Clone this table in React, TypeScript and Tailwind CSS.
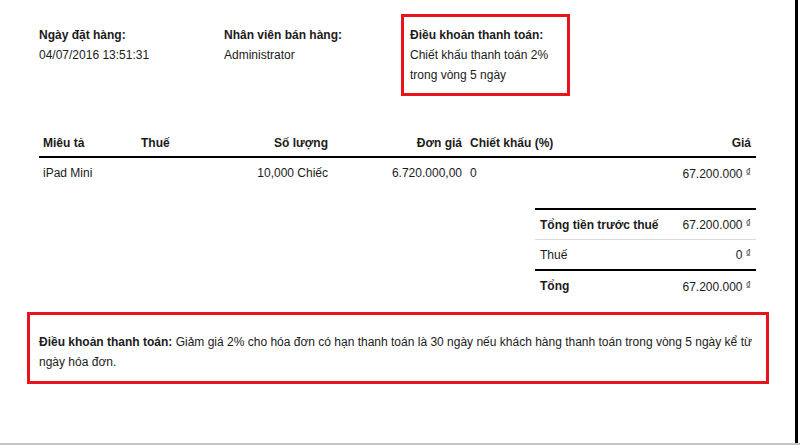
/**
 * Hóa đơn — phần thông tin đơn hàng, bảng sản phẩm và điều khoản thanh toán.
 */

const lines = [
  {
    desc: "iPad Mini",
    tax: "",
    qty: "10,000 Chiếc",
    unit: "6.720.000,00",
    discount: "0",
    price: "67.200.000",
  },
];

const totals = [
  { label: "Tổng tiền trước thuế", value: "67.200.000", bold: true, row: "h-[30px] border-b border-[#dcdcdc]" },
  { label: "Thuế", value: "0", bold: false, row: "h-[31px] border-b-2 border-black" },
  { label: "Tổng", value: "67.200.000", bold: true, row: "h-[30px]" },
];

function Money({ value }: { value: string }) {
  return (
    <span>
      {value} <span className="text-[10px] align-[2px]">₫</span>
    </span>
  );
}

const cols = "grid grid-cols-[98px_100px_95px_134px_140px_150px]";

export default function App() {
  return (
    <div
      className="h-[445px] w-[800px] overflow-hidden border-b-2 border-[#c4c4c4] bg-white text-[12px] leading-[20px] text-[#1b1b1b]"
      style={{ fontFamily: '"Liberation Sans", Arial, sans-serif' }}
    >
      <div className="h-full w-[798px] border-r-[3px] border-black">
        {/* Thông tin đơn hàng */}
        <div className="flex items-start pl-[39px] pt-[14px]">
          <div className="w-[185px] pt-[11px]">
            <p className="font-bold">Ngày đặt hàng:</p>
            <p>04/07/2016 13:51:31</p>
          </div>
          <div className="w-[177px] pt-[11px]">
            <p className="font-bold">Nhân viên bán hàng:</p>
            <p>Administrator</p>
          </div>
          <div className="w-[169px] border-[3px] border-[#e8141c] pb-[8px] pl-[6px] pt-[8px]">
            <p className="font-bold">Điều khoản thanh toán:</p>
            <p>Chiết khấu thanh toán 2%</p>
            <p>trong vòng 5 ngày</p>
          </div>
        </div>

        {/* Bảng sản phẩm */}
        <div className="ml-[39px] mt-[37px] w-[717px]">
          <div className={`${cols} border-b-2 border-black pb-[3px] font-bold`}>
            <div className="pl-[4px]">Miêu tả</div>
            <div className="pl-[4px]">Thuế</div>
            <div className="pr-[4px] text-right">Số lượng</div>
            <div className="pr-[4px] text-right">Đơn giá</div>
            <div className="pl-[4px]">Chiết khấu (%)</div>
            <div className="pr-[5px] text-right">Giá</div>
          </div>
          {lines.map((l) => (
            <div key={l.desc} className={`${cols} pt-[5px]`}>
              <div className="pl-[4px]">{l.desc}</div>
              <div className="pl-[4px]">{l.tax}</div>
              <div className="pr-[4px] text-right">{l.qty}</div>
              <div className="pr-[4px] text-right">{l.unit}</div>
              <div className="pl-[4px]">{l.discount}</div>
              <div className="pr-[5px] text-right">
                <Money value={l.price} />
              </div>
            </div>
          ))}

          {/* Tổng cộng */}
          <div className="ml-auto mt-[24px] w-[221px] border-t-2 border-black">
            {totals.map((t) => (
              <div
                key={t.label}
                className={`flex items-center justify-between px-[5px] ${t.row}`}
              >
                <span className={t.bold ? "font-bold" : ""}>{t.label}</span>
                <Money value={t.value} />
              </div>
            ))}
          </div>
        </div>

        {/* Điều khoản thanh toán */}
        <div className="ml-[27px] mt-[11px] w-[742px] border-[3px] border-[#e8141c] pb-[9px] pl-[9px] pr-[6px] pt-[17px]">
          <p>
            <span className="font-bold">Điều khoản thanh toán:</span> Giảm giá 2% cho hóa đơn có hạn
            thanh toán là 30 ngày nếu khách hàng thanh toán trong vòng 5 ngày kể từ ngày hóa đơn.
          </p>
        </div>
      </div>
    </div>
  );
}
